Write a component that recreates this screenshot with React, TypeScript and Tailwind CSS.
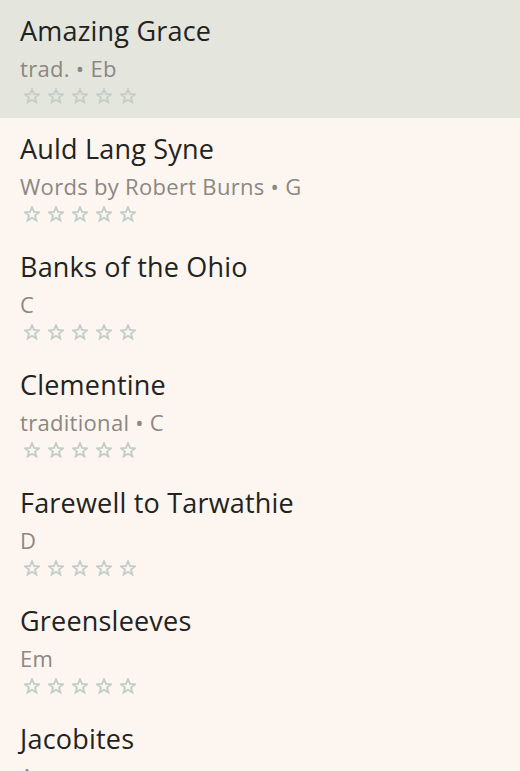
import React from 'react';

interface Song {
  title: string;
  subtitle: string;
}

const songs: Song[] = [
  { title: 'Amazing Grace', subtitle: 'trad. • Eb' },
  { title: 'Auld Lang Syne', subtitle: 'Words by Robert Burns • G' },
  { title: 'Banks of the Ohio', subtitle: 'C' },
  { title: 'Clementine', subtitle: 'traditional • C' },
  { title: 'Farewell to Tarwathie', subtitle: 'D' },
  { title: 'Greensleeves', subtitle: 'Em' },
  { title: 'Jacobites', subtitle: 'Am' },
];

// outline star, drawn to fill its 16px box
const StarIcon = () => (
  <svg width="16" height="16" viewBox="0 0 24 24" fill="none" stroke="#c3cec8" strokeWidth="2.8" strokeLinejoin="miter">
    <polygon points="12,1.8 14.82,8.92 22.46,9.4 16.57,14.28 18.47,21.7 12,17.6 5.53,21.7 7.43,14.28 1.54,9.4 9.18,8.92" />
  </svg>
);

const SongRow = ({ song, selected }: { song: Song; selected: boolean }) => (
  <div className={`h-[118px] shrink-0 px-5 pt-[12px] ${selected ? 'bg-[#e4e6de]' : ''}`}>
    <div className="text-[27px] leading-[38px] tracking-[0.2px] text-[#222320]">{song.title}</div>
    <div className="text-[22px] leading-[30px] mt-[3px] tracking-[0.3px] text-[#8b8782]">{song.subtitle}</div>
    <div className="flex gap-[8px] ml-[4px] mt-[5px]">
      {[0, 1, 2, 3, 4].map((i) => (
        <StarIcon key={i} />
      ))}
    </div>
  </div>
);

export default function App() {
  return (
    <div className="w-[520px] h-[771px] overflow-hidden flex flex-col bg-[#fdf6f0]" style={{ fontFamily: '"Open Sans", sans-serif' }}>
      {songs.map((s, i) => (
        <SongRow key={s.title} song={s} selected={i === 0} />
      ))}
    </div>
  );
}
